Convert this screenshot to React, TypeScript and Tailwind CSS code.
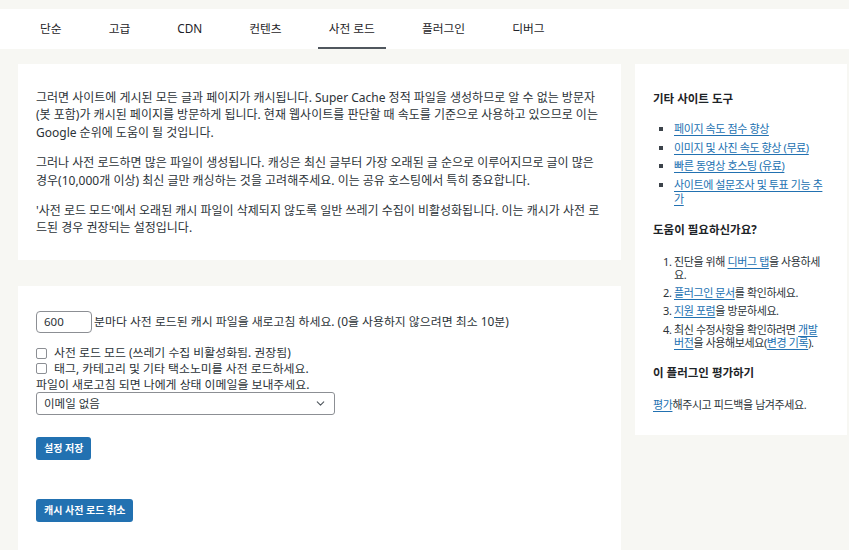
import { ChevronDown } from 'lucide-react';

const tabs = ['단순', '고급', 'CDN', '컨텐츠', '사전 로드', '플러그인', '디버그'];

const tools = [
  '페이지 속도 점수 향상',
  '이미지 및 사진 속도 향상 (무료)',
  '빠른 동영상 호스팅 (유료)',
  '사이트에 설문조사 및 투표 기능 추가',
];

function Link({ children }: { children: React.ReactNode }) {
  return <a className="text-[#2271b1] underline underline-offset-2 decoration-1">{children}</a>;
}

function Checkbox({ label }: { label: string }) {
  return (
    <label className="flex items-center gap-[7px] h-[15.6px]">
      <span className="w-[11px] h-[11px] rounded-[2px] border border-[#8c8f94] bg-white shrink-0" />
      <span>{label}</span>
    </label>
  );
}

export default function App() {
  return (
    <div className="min-h-screen bg-[#f7f7f3] pt-[9px] text-[#2c3338] font-['Noto_Sans','Noto_Sans_CJK_KR',sans-serif] overflow-hidden">
      {/* Tabs */}
      <nav className="h-10 bg-white flex pl-[29px] gap-[25px] text-[11.75px] text-[#1d2327]">
        {tabs.map((t) => (
          <div key={t} className="relative px-[11px] flex items-center">
            {t}
            {t === '사전 로드' && <span className="absolute left-0 right-0 bottom-0 h-[2px] bg-[#50575e]" />}
          </div>
        ))}
      </nav>

      <div className="flex gap-[14px] pl-[18px] pt-[15px]">
        {/* Main column */}
        <div className="w-[603px] shrink-0 flex flex-col gap-[26px]">
          <section className="bg-white px-[18px] pt-[25px] pb-[23px] text-[12px] leading-[17.4px] flex flex-col gap-[13px]">
            <p>
              그러면 사이트에 게시된 모든 글과 페이지가 캐시됩니다. Super Cache 정적 파일을 생성하므로 알 수 없는 방문자
              (봇 포함)가 캐시된 페이지를 방문하게 됩니다. 현재 웹사이트를 판단할 때 속도를 기준으로 사용하고 있으므로 이는
              Google 순위에 도움이 될 것입니다.
            </p>
            <p>
              그러나 사전 로드하면 많은 파일이 생성됩니다. 캐싱은 최신 글부터 가장 오래된 글 순으로 이루어지므로 글이 많은
              경우(10,000개 이상) 최신 글만 캐싱하는 것을 고려해주세요. 이는 공유 호스팅에서 특히 중요합니다.
            </p>
            <p>
              '사전 로드 모드'에서 오래된 캐시 파일이 삭제되지 않도록 일반 쓰레기 수집이 비활성화됩니다. 이는 캐시가 사전 로드된
              경우 권장되는 설정입니다.
            </p>
          </section>

          <section className="bg-white px-[18px] pt-[25px] pb-[40px] text-[11.9px]">
            <div className="flex items-center">
              <div className="w-[56px] h-[22px] border border-[#8c8f94] rounded-[4px] flex items-center pl-[7px] text-[11.5px]">
                600
              </div>
              <span className="pl-[2px]">분마다 사전 로드된 캐시 파일을 새로고침 하세요. (0을 사용하지 않으려면 최소 10분)</span>
            </div>

            <div className="mt-[12.6px] leading-[15.6px]">
              <Checkbox label="사전 로드 모드 (쓰레기 수집 비활성화됨. 권장됨)" />
              <Checkbox label="태그, 카테고리 및 기타 택소노미를 사전 로드하세요." />
              <div>파일이 새로고침 되면 나에게 상태 이메일을 보내주세요.</div>
            </div>

            <div className="w-[299px] h-[22.4px] border border-[#8c8f94] rounded-[3px] flex items-center justify-between pl-[7px] pr-[7px] text-[11.5px]">
              <span>이메일 없음</span>
              <ChevronDown size={13} strokeWidth={2} className="text-[#50575e]" />
            </div>

            <button className="mt-[22px] h-[23px] px-[8px] bg-[#2271b1] text-white text-[10px] font-bold rounded-[3px] block">
              설정 저장
            </button>
            <button className="mt-[39px] h-[23px] px-[8px] bg-[#2271b1] text-white text-[10px] font-bold rounded-[3px] block">
              캐시 사전 로드 취소
            </button>
          </section>
        </div>

        {/* Sidebar */}
        <aside className="w-[212px] shrink-0 self-start bg-white px-[18px] pt-[27px] pb-[23px] text-[11px] tracking-[-0.4px]">
          <h3 className="text-[11.5px] font-bold leading-4 tracking-normal text-[#1d2327]">기타 사이트 도구</h3>
          <ul className="mt-[15px] flex flex-col gap-[4.5px] leading-[14px]">
            {tools.map((t) => (
              <li key={t} className="flex">
                <span className="w-[4px] h-[4px] bg-[#3c434a] mt-[5px] ml-[6px] mr-[11px] shrink-0" />
                <Link>{t}</Link>
              </li>
            ))}
          </ul>

          <h3 className="mt-[16px] text-[11.5px] font-bold leading-4 tracking-normal text-[#1d2327]">도움이 필요하신가요?</h3>
          <ol className="mt-[17px] list-decimal list-outside pl-[21px] flex flex-col gap-[4.6px] leading-[13.6px]">
            <li>
              진단을 위해 <Link>디버그 탭</Link>을 사용하세요.
            </li>
            <li>
              <Link>플러그인 문서</Link>를 확인하세요.
            </li>
            <li>
              <Link>지원 포럼</Link>을 방문하세요.
            </li>
            <li>
              최신 수정사항을 확인하려면 <Link>개발 버전</Link>을 사용해보세요(<Link>변경 기록</Link>).
            </li>
          </ol>

          <h3 className="mt-[15px] text-[11.5px] font-bold leading-4 tracking-normal text-[#1d2327]">이 플러그인 평가하기</h3>
          <p className="mt-[17.6px] leading-[14px]">
            <Link>평가</Link>해주시고 피드백을 남겨주세요.
          </p>
        </aside>
      </div>
    </div>
  );
}
